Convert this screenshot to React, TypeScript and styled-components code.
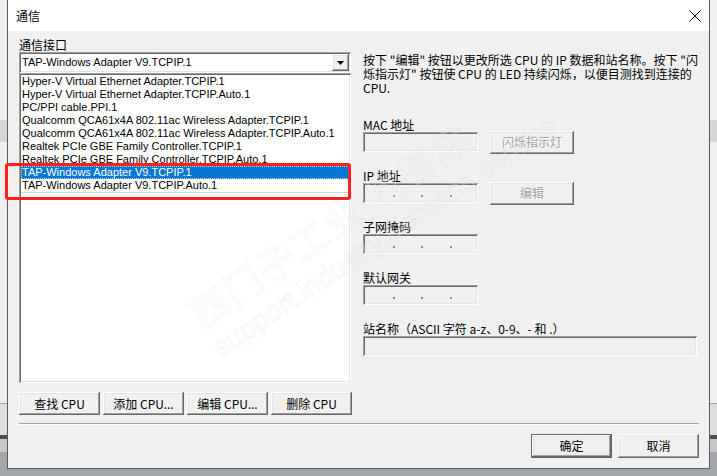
import React from 'react';
import styled, { createGlobalStyle } from 'styled-components';

const GlobalStyle = createGlobalStyle`
  html, body { margin: 0; padding: 0; }
  body {
    width: 717px;
    height: 476px;
    overflow: hidden;
    background: linear-gradient(
      to bottom,
      #f0f0f0 0px, #f0f0f0 120px,
      #d6d6d6 120px, #d6d6d6 142px,
      #f0f0f0 142px, #f0f0f0 403px,
      #a0a0a0 403px, #a0a0a0 404px,
      #dedede 404px, #dedede 435px,
      #4f4f4f 435px, #4f4f4f 439px,
      #c6c8cb 439px, #c6c8cb 452px,
      #a2a5a9 452px
    );
    font-family: "Liberation Sans", "Noto Sans CJK SC", sans-serif;
  }
`;

const cjk = `"Noto Sans CJK SC", "Liberation Sans", sans-serif`;
const latin = `"Liberation Sans", "Noto Sans CJK SC", sans-serif`;

const Stage = styled.div`
  position: relative;
  width: 717px;
  height: 476px;
  padding-left: 7px;
  box-sizing: border-box;
`;

const Dialog = styled.div`
  width: 703px;
  height: 469px;
  box-sizing: border-box;
  border: 1px solid #5a5a5a;
  border-top: none;
  display: flex;
  flex-direction: column;
  background: #f0f0f0;
`;

const TitleBar = styled.div`
  height: 31px;
  flex: none;
  background: #ffffff;
  display: flex;
  align-items: center;
  justify-content: space-between;
  padding: 0 8px 0 8px;
`;

const Title = styled.span`
  font: 12px/16px ${cjk};
  color: #000;
  padding-top: 1px;
`;

const Body = styled.div`
  flex: 1;
  display: flex;
  flex-direction: column;
  padding: 6px 10px 0 11px;
`;

const Main = styled.div`
  display: grid;
  grid-template-columns: 332px 1fr;
  column-gap: 12px;
`;

const LeftCol = styled.div`
  display: flex;
  flex-direction: column;
`;

const RightCol = styled.div`
  display: flex;
  flex-direction: column;
`;

const GroupLabel = styled.div`
  font: 12px/15px ${cjk};
  color: #000;
  height: 15px;
`;

const sunken = `
  box-shadow: inset 1px 1px #a0a0a0, inset -1px -1px #ffffff, inset 2px 2px #696969, inset -2px -2px #e3e3e3;
`;

const raised = `
  box-shadow: inset -1px -1px #696969, inset 1px 1px #ffffff, inset -2px -2px #a0a0a0, inset 2px 2px #e3e3e3;
`;

const Combo = styled.div`
  height: 21px;
  background: #ffffff;
  ${sunken}
  display: flex;
  align-items: center;
  padding: 2px 2px 2px 3px;
  box-sizing: border-box;
`;

const ComboText = styled.span`
  flex: 1;
  font: 11px/15px ${latin};
  color: #000;
`;

const ComboButton = styled.div`
  width: 17px;
  height: 17px;
  background: #f0f0f0;
  ${raised}
  display: flex;
  align-items: center;
  justify-content: center;
`;

const ListBox = styled.div`
  height: 310px;
  background: #ffffff;
  ${sunken}
  padding: 2px;
  box-sizing: border-box;
  display: flex;
  flex-direction: column;
`;

const ListItem = styled.div<{ $selected?: boolean; $ruled?: boolean }>`
  height: 13px;
  font: 11px/13px ${latin};
  padding-left: 1px;
  white-space: nowrap;
  color: ${(p) => (p.$selected ? '#ffffff' : '#000000')};
  background: ${(p) => (p.$selected ? '#0078d7' : 'transparent')};
  outline: ${(p) => (p.$selected ? '1px dotted #f6c98a' : 'none')};
  outline-offset: -1px;
  border-top: ${(p) => (p.$ruled ? '1px solid #d4d4d4' : 'none')};
  box-sizing: border-box;
`;

const ButtonRow = styled.div`
  display: grid;
  grid-template-columns: repeat(4, 81px);
  column-gap: 3px;
  margin-top: 9px;
`;

const Button = styled.button<{ $default?: boolean; $disabled?: boolean; $w?: number }>`
  width: ${(p) => p.$w ?? 81}px;
  height: ${(p) => (p.$default !== undefined ? 24 : 23)}px;
  padding: 0;
  border: none;
  background: #f0f0f0;
  font: 12px/16px ${cjk};
  color: ${(p) => (p.$disabled ? '#a0a0a0' : '#000000')};
  text-shadow: ${(p) => (p.$disabled ? '1px 1px #ffffff' : 'none')};
  ${(p) =>
    p.$default
      ? `box-shadow: inset 0 0 0 1px #646464, inset -2px -2px #696969, inset 2px 2px #ffffff, inset -3px -3px #a0a0a0, inset 3px 3px #e3e3e3;`
      : raised}
  flex: none;
`;

const Desc = styled.div`
  margin-top: 16px;
  font: 12px/14px ${cjk};
  color: #000;
`;

const DescLine = styled.div`
  white-space: nowrap;
  height: 14px;
`;

const Fields = styled.div`
  margin-top: 23px;
  display: flex;
  flex-direction: column;
  gap: 17px;
`;

const Field = styled.div`
  display: flex;
  flex-direction: column;
`;

const FieldLabel = styled.div`
  font: 12px/14px ${cjk};
  color: #000;
  height: 14px;
  white-space: nowrap;
`;

const FieldRow = styled.div`
  display: flex;
  align-items: center;
  gap: 12px;
  height: 20px;
`;

const Input = styled.div<{ $wide?: boolean }>`
  width: ${(p) => (p.$wide ? '334px' : '115px')};
  height: 20px;
  box-sizing: border-box;
  background: #f0f0f0;
  ${sunken}
  display: grid;
  grid-template-columns: 29px 28px 29px 1fr;
  padding-left: 2px;
`;

const Seg = styled.div`
  display: flex;
  justify-content: flex-end;
  align-items: flex-end;
  padding-bottom: 6px;
`;

const Dot = styled.span`
  width: 2px;
  height: 2px;
  background: #8c8c8c;
  margin-right: -1px;
`;

const Separator = styled.div`
  margin-top: 8px;
  height: 1px;
  background: #a0a0a0;
  border-bottom: 1px solid #ffffff;
`;

const Footer = styled.div`
  margin-top: 9px;
  display: flex;
  justify-content: flex-end;
  gap: 6px;
`;

const Annotation = styled.div`
  position: absolute;
  left: 5px;
  top: 163px;
  width: 346px;
  height: 37px;
  box-sizing: border-box;
  border: 3px solid #ff1f1f;
  border-radius: 3px;
  pointer-events: none;
`;

const Watermark = styled.div`
  position: absolute;
  left: 182px;
  top: 300px;
  transform-origin: 0 0;
  transform: rotate(-34deg);
  pointer-events: none;
  white-space: nowrap;
  display: flex;
  flex-direction: column;
  gap: 6px;
`;

const WmLine = styled.div<{ $size: number; $latin?: boolean }>`
  font-family: ${(p) => (p.$latin ? latin : cjk)};
  font-size: ${(p) => p.$size}px;
  line-height: ${(p) => p.$size + 2}px;
  color: rgba(255, 255, 255, 0.25);
  -webkit-text-stroke: 1px rgba(175, 175, 175, 0.16);
  letter-spacing: ${(p) => (p.$latin ? 0 : 2)}px;
`;

const items = [
  'Hyper-V Virtual Ethernet Adapter.TCPIP.1',
  'Hyper-V Virtual Ethernet Adapter.TCPIP.Auto.1',
  'PC/PPI cable.PPI.1',
  'Qualcomm QCA61x4A 802.11ac Wireless Adapter.TCPIP.1',
  'Qualcomm QCA61x4A 802.11ac Wireless Adapter.TCPIP.Auto.1',
  'Realtek PCIe GBE Family Controller.TCPIP.1',
  'Realtek PCIe GBE Family Controller.TCPIP.Auto.1',
  'TAP-Windows Adapter V9.TCPIP.1',
  'TAP-Windows Adapter V9.TCPIP.Auto.1',
];

const IpDots = () => (
  <>
    <Seg><Dot /></Seg>
    <Seg><Dot /></Seg>
    <Seg><Dot /></Seg>
  </>
);

export default function App() {
  return (
    <>
      <GlobalStyle />
      <Stage>
        <Dialog>
          <TitleBar>
            <Title>通信</Title>
            <svg width="12" height="12" viewBox="0 0 12 12">
              <path d="M0.5 0.5 L11.5 11.5 M11.5 0.5 L0.5 11.5" stroke="#000" strokeWidth="1" fill="none" />
            </svg>
          </TitleBar>
          <Body>
            <Main>
              <LeftCol>
                <GroupLabel>通信接口</GroupLabel>
                <Combo>
                  <ComboText>TAP-Windows Adapter V9.TCPIP.1</ComboText>
                  <ComboButton>
                    <svg width="7" height="4" viewBox="0 0 7 4">
                      <path d="M0 0 H7 L3.5 4 Z" fill="#000" />
                    </svg>
                  </ComboButton>
                </Combo>
                <ListBox>
                  {items.map((t, i) => (
                    <ListItem key={t} $selected={i === 7}>
                      {t}
                    </ListItem>
                  ))}
                  <ListItem $ruled> </ListItem>
                </ListBox>
                <ButtonRow>
                  <Button>查找 CPU</Button>
                  <Button>添加 CPU...</Button>
                  <Button>编辑 CPU...</Button>
                  <Button>删除 CPU</Button>
                </ButtonRow>
              </LeftCol>
              <RightCol>
                <Desc>
                  <DescLine>按下 "编辑" 按钮以更改所选 CPU 的 IP 数据和站名称。按下 "闪</DescLine>
                  <DescLine>烁指示灯" 按钮使 CPU 的 LED 持续闪烁，以便目测找到连接的</DescLine>
                  <DescLine>CPU.</DescLine>
                </Desc>
                <Fields>
                  <Field>
                    <FieldLabel>MAC 地址</FieldLabel>
                    <FieldRow>
                      <Input />
                      <Button $disabled $w={84}>闪烁指示灯</Button>
                    </FieldRow>
                  </Field>
                  <Field>
                    <FieldLabel>IP 地址</FieldLabel>
                    <FieldRow>
                      <Input><IpDots /></Input>
                      <Button $disabled $w={84}>编辑</Button>
                    </FieldRow>
                  </Field>
                  <Field>
                    <FieldLabel>子网掩码</FieldLabel>
                    <FieldRow>
                      <Input><IpDots /></Input>
                    </FieldRow>
                  </Field>
                  <Field>
                    <FieldLabel>默认网关</FieldLabel>
                    <FieldRow>
                      <Input><IpDots /></Input>
                    </FieldRow>
                  </Field>
                  <Field>
                    <FieldLabel>站名称（ASCII 字符 a-z、0-9、- 和 .）</FieldLabel>
                    <FieldRow>
                      <Input $wide />
                    </FieldRow>
                  </Field>
                </Fields>
              </RightCol>
            </Main>
            <Separator />
            <Footer>
              <Button $default={true}>确定</Button>
              <Button $default={false}>取消</Button>
            </Footer>
          </Body>
        </Dialog>
        <Watermark>
          <WmLine $size={38}>西门子工业  找答案</WmLine>
          <WmLine $size={28} $latin>support.industry.siemens.com/cs</WmLine>
        </Watermark>
        <Annotation />
      </Stage>
    </>
  );
}
